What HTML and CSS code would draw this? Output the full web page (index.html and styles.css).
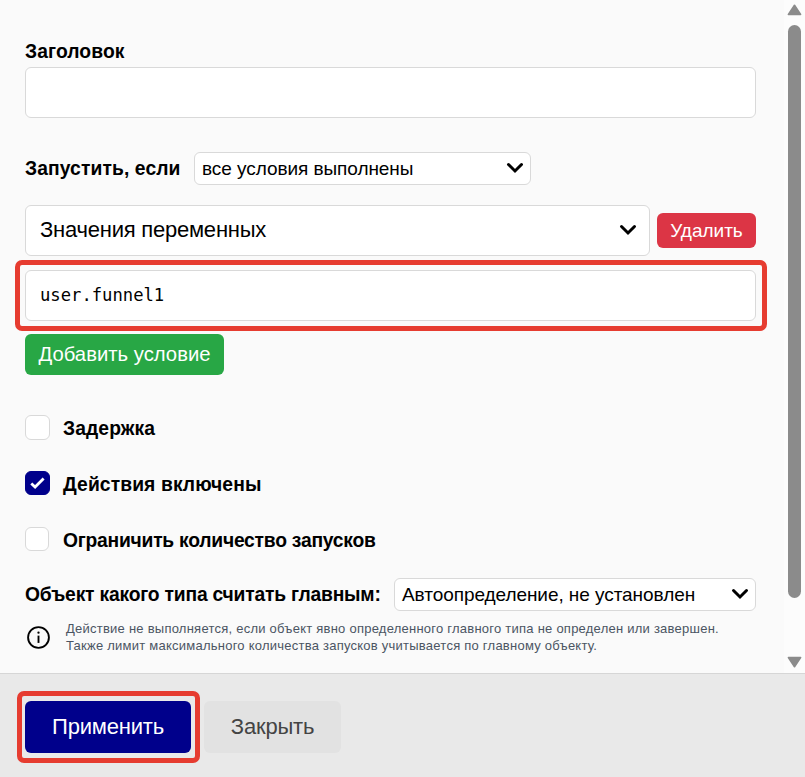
FILE: index.html
```html
<!DOCTYPE html>
<html lang="ru">
<head>
<meta charset="utf-8">
<title>Настройки действия</title>
<link rel="stylesheet" href="styles.css">
</head>
<body>
<div class="dialog">
  <div class="viewport">
    <main class="form">
      <label class="label title-label">Заголовок</label>
      <div class="field title-field"></div>

      <div class="row run-row">
        <span class="label run-label">Запустить, если</span>
        <div class="select run-select"><span class="run-value">все условия выполнены</span><svg class="chevron" viewBox="0 0 18 12"><path d="M2.5 2.5L9 9l6.5-6.5"/></svg></div>
      </div>

      <div class="row condition-row">
        <div class="field condition-select"><span class="condition-value">Значения переменных</span><svg class="chevron" viewBox="0 0 18 12"><path d="M2.5 2.5L9 9l6.5-6.5"/></svg></div>
        <button class="btn btn-danger"><span>Удалить</span></button>
      </div>

      <div class="field code-field marked"><span>user.funnel1</span></div>
      <button class="btn btn-success"><span>Добавить условие</span></button>

      <div class="check-row delay"><span class="box"></span><span class="label">Задержка</span></div>
      <div class="check-row enabled"><span class="box checked"><svg viewBox="0 0 23 22"><path d="M5.3 11.4l3.8 3.6L17.6 6.4"/></svg></span><span class="label">Действия включены</span></div>
      <div class="check-row limit"><span class="box"></span><span class="label">Ограничить количество запусков</span></div>

      <div class="row object-row">
        <span class="label object-label">Объект какого типа считать главным:</span>
        <div class="select object-select"><span class="object-value">Автоопределение, не установлен</span><svg class="chevron" viewBox="0 0 18 12"><path d="M2.5 2.5L9 9l6.5-6.5"/></svg></div>
      </div>

      <div class="note">
        <svg class="info" viewBox="0 0 24 24"><circle cx="12" cy="12" r="10"/><path d="M12 10.2v7"/><circle class="dot" cx="12" cy="7.4" r="1.1"/></svg>
        <p>Действие не выполняется, если объект явно определенного главного типа не определен или завершен.<br>Также лимит максимального количества запусков учитывается по главному объекту.</p>
      </div>
    </main>
    <div class="scrollbar">
      <svg class="arrow" viewBox="0 0 15 12"><path d="M7.5 1.3L13.6 10.4H1.4z"/></svg>
      <div class="thumb"></div>
      <svg class="arrow" viewBox="0 0 15 12"><path d="M1.4 1.6h12.2L7.5 10.7z"/></svg>
    </div>
  </div>
  <footer class="footer">
    <button class="btn btn-primary marked"><span>Применить</span></button>
    <button class="btn btn-muted"><span>Закрыть</span></button>
  </footer>
</div>
</body>
</html>
```
FILE: styles.css
```css
* { box-sizing: border-box; }

body {
  margin: 0;
  font-family: "Liberation Sans", Arial, sans-serif;
  color: #000;
}

.dialog {
  display: flex;
  flex-direction: column;
  width: 805px;
  height: 777px;
  overflow: hidden;
  background: #fafafa;
}

.viewport { display: flex; flex: none; height: 673px; }

.form {
  width: 784px;
  padding: 40px 28px 0 25px;
}

.label {
  display: block;
  font-size: 19.3px;
  font-weight: 700;
  line-height: 24px;
  letter-spacing: 0.1px;
  white-space: nowrap;
}

.field, .select {
  display: flex;
  align-items: center;
  justify-content: space-between;
  background: #fff;
  border: 1px solid #d9d9d9;
  border-radius: 6px;
  white-space: nowrap;
}

.field { height: 51px; padding: 0 12px 2px 14px; font-size: 22px; }
.select { height: 33px; padding: 0 6px 0 7px; font-size: 19px; letter-spacing: -0.06px; }
.select .chevron { margin-bottom: 1px; }

.title-field { margin-top: 3px; }

.row { display: flex; align-items: center; }
.run-row { margin-top: 34px; }
.run-label { width: 169px; }
.run-select { width: 337px; }

.condition-row { margin-top: 20px; gap: 7px; }
.condition-select { width: 625px; letter-spacing: -0.23px; }

.chevron {
  width: 18px;
  height: 12px;
  fill: none;
  stroke: #000;
  stroke-width: 3;
  stroke-linecap: round;
}

.btn {
  display: flex;
  align-items: center;
  justify-content: center;
  padding: 0;
  border: 0;
  border-radius: 6px;
  font-family: inherit;
  color: #fff;
  white-space: nowrap;
}

.btn-danger { width: 99px; height: 35px; background: #dc3545; font-size: 19px; }
.btn-success { width: 199px; height: 41px; margin-top: 13px; background: #28a745; font-size: 20.3px; }

.code-field {
  margin-top: 14px;
  font-family: "DejaVu Sans Mono", monospace;
  font-size: 17.2px;
}

.marked { position: relative; }
.marked::after {
  content: "";
  position: absolute;
  border: 5px solid #e63c30;
  border-radius: 7px;
}
.code-field::after { inset: -11px -12px -11px -11px; }
.btn-primary::after { inset: -10px -9px -10px -8px; }

.check-row { display: flex; align-items: flex-start; height: 25px; gap: 13px; }
.check-row .label { padding-top: 2px; }
.delay { margin-top: 40px; }
.enabled, .limit { margin-top: 31px; }

.box {
  width: 25px;
  height: 25px;
  background: #fff;
  border: 1px solid #d9d9d9;
  border-radius: 6px;
}
.box.checked { height: 24px; background: #00008b; border-color: #00008b; }
.box svg {
  display: block;
  width: 23px;
  height: 22px;
  fill: none;
  stroke: #fff;
  stroke-width: 2.8;
}
.limit .box { width: 24px; height: 24px; }
.limit { gap: 14px; }
.limit .label { letter-spacing: -0.24px; }

.object-row { margin-top: 26px; }
.object-label { width: 369px; letter-spacing: -0.2px; }
.object-select { width: 362px; }

.note { display: flex; margin-top: 9px; }
.info {
  width: 25px;
  height: 25px;
  margin: 5px 15px 0 1px;
  fill: none;
  stroke: #000;
  stroke-width: 1.8;
}
.info .dot { fill: #000; stroke: none; }
.note p {
  margin: 0;
  font-size: 13px;
  line-height: 17px;
  letter-spacing: 0.24px;
  color: #4b5563;
  white-space: nowrap;
}

.scrollbar {
  display: flex;
  flex-direction: column;
  align-items: center;
  width: 21px;
  padding-top: 4px;
  background: #fcfcfc;
}
.arrow { width: 15px; height: 12px; fill: #8b8b8b; stroke: #8b8b8b; stroke-width: 1.6; stroke-linejoin: round; }
.thumb { width: 13px; height: 573px; margin: 9px 0 58px; border-radius: 7px; background: #8b8b8b; }

.footer {
  display: flex;
  align-items: flex-start;
  flex: 1;
  gap: 13px;
  padding: 27px 25px;
  background: #e9e9e9;
  border-top: 1px solid #d6d6d6;
}
.footer .btn { height: 52px; font-size: 22px; letter-spacing: -0.2px; }
.btn-primary { width: 166px; background: #00008b; }
.footer .btn-muted { width: 137px; background: #e2e2e2; color: #444; }
```
